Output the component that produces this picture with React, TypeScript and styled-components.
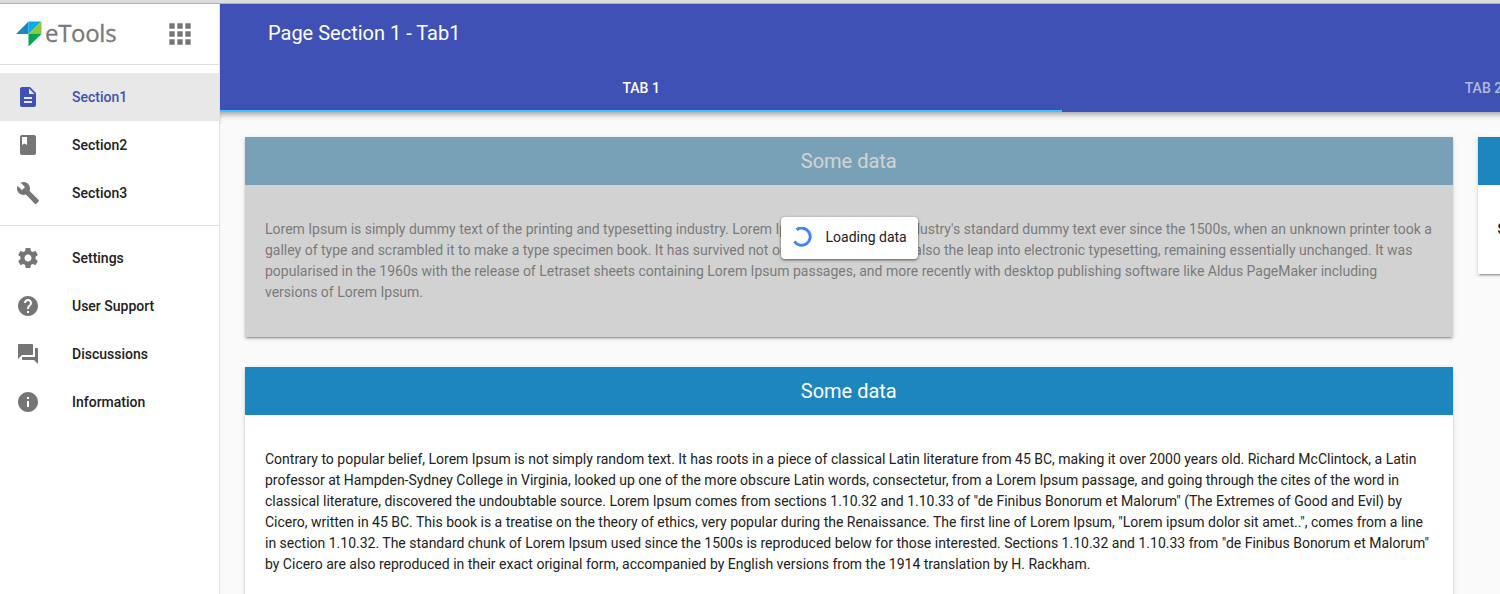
import React from "react";
import styled, { createGlobalStyle } from "styled-components";

const GlobalStyle = createGlobalStyle`
  * { box-sizing: border-box; }
  html, body { margin: 0; padding: 0; height: 594px; overflow: hidden; }
  body {
    font-family: Roboto, "Noto Sans", sans-serif;
    font-size: 14px;
    color: #212121;
    background: #fafafa;
  }
`;

const Page = styled.div`
  display: flex;
  flex-direction: column;
  height: 594px;
  overflow: hidden;
`;

const WindowEdge = styled.div`
  flex: none;
  height: 4px;
  background: #dcdcdc;
  border-bottom: 1px solid #b0b0b0;
`;

const Layout = styled.div`
  flex: 1;
  display: flex;
  min-height: 0;
`;

const Drawer = styled.nav`
  flex: none;
  width: 220px;
  background: #fff;
  border-right: 1px solid #e0e0e0;
`;

const Brand = styled.div`
  display: flex;
  align-items: center;
  justify-content: space-between;
  height: 61px;
  padding: 1px 23.5px 0 16px;
  border-bottom: 1px solid #e0e0e0;
`;

const Logo = styled.div`
  display: flex;
  align-items: center;
  padding-bottom: 1px;
`;

const LogoMark = styled.svg`
  width: 27px;
  height: 26px;
`;

const LogoText = styled.span`
  margin: -2px 0 0 2px;
  font: 400 24px/30px "Open Sans", sans-serif;
  letter-spacing: -0.3px;
  color: #77787b;
  -webkit-text-stroke: 0.3px #77787b;
`;

const Icon = styled.svg<{ $size?: number }>`
  flex: none;
  width: ${(p) => p.$size ?? 24}px;
  height: ${(p) => p.$size ?? 24}px;
  fill: currentColor;
`;

const AppsButton = styled.span`
  display: flex;
  padding-bottom: 1px;
  color: #757575;
`;

const Menu = styled.div`
  padding: 8px 0;
  & + & { border-top: 1px solid #e0e0e0; }
`;

const MenuItem = styled.div<{ $active?: boolean }>`
  display: flex;
  align-items: center;
  gap: 32px;
  height: 48px;
  padding-left: 16px;
  font-weight: 500;
  color: ${(p) => (p.$active ? "#3f51b5" : "#212121")};
  background: ${(p) => (p.$active ? "#e8e8e8" : "transparent")};
  ${Icon} { color: ${(p) => (p.$active ? "#3f51b5" : "#757575")}; }
`;

const Main = styled.main`
  flex: 1;
  min-width: 0;
  overflow: hidden;
`;

const Wide = styled.div`
  width: 1684.6px;
`;

const Header = styled.header`
  position: relative;
  height: 108px;
  color: #fff;
  background: #3f51b5;

  &::after {
    content: "";
    position: absolute;
    top: 100%;
    left: 0;
    right: 0;
    height: 12px;
    box-shadow: inset 0 5px 6px -3px rgba(0, 0, 0, 0.4);
  }
`;

const Title = styled.h1`
  margin: 0;
  height: 60px;
  padding-left: 48px;
  font-size: 20px;
  font-weight: 400;
  line-height: 58px;
`;

const Tabs = styled.div`
  display: flex;
  height: 48px;
`;

const Tab = styled.div<{ $active?: boolean }>`
  flex: 1;
  display: flex;
  align-items: center;
  justify-content: center;
  font-weight: 500;
  color: ${(p) => (p.$active ? "#fff" : "rgba(255, 255, 255, 0.6)")};
  box-shadow: ${(p) => (p.$active ? "inset 0 -2px #40c4ff" : "none")};
`;

const Content = styled.div`
  display: flex;
  align-items: flex-start;
  gap: 25px;
  padding: 25px;
`;

const Column = styled.div<{ $width: number }>`
  flex: none;
  display: flex;
  flex-direction: column;
  gap: 30px;
  width: ${(p) => p.$width}px;
`;

const Card = styled.section`
  position: relative;
  background: #fff;
  box-shadow: 0 2px 2px rgba(0, 0, 0, 0.14), 0 1px 5px rgba(0, 0, 0, 0.12),
    0 3px 1px -2px rgba(0, 0, 0, 0.2);
`;

const CardTitle = styled.h2`
  margin: 0;
  height: 48px;
  padding-right: 0.5px;
  font-size: 20px;
  font-weight: 400;
  line-height: 48px;
  text-align: center;
  color: #fff;
  background: #1e86bf;
`;

const CardBody = styled.div<{ $strong?: boolean }>`
  padding: 34px 21px 34px ${(p) => (p.$strong ? "19.5px" : "20px")};
  font-weight: ${(p) => (p.$strong ? 700 : 400)};
  line-height: 21px;
  letter-spacing: -0.004px;
`;

const Veil = styled.div`
  position: absolute;
  inset: 0;
  display: flex;
  align-items: center;
  justify-content: center;
  padding-top: 1px;
  background: rgba(180, 180, 180, 0.6);
`;

const Loading = styled.div`
  display: flex;
  align-items: center;
  gap: 14px;
  width: 137px;
  height: 42px;
  padding: 0 0 1px 11px;
  border-radius: 4px;
  background: #fff;
  box-shadow: 0 1px 3px rgba(0, 0, 0, 0.6);
  white-space: nowrap;
`;

const Spinner = styled.svg`
  flex: none;
  width: 20px;
  height: 20px;
  fill: none;
  stroke: #4285f4;
  stroke-width: 3;
`;

const paths = {
  apps: "M4 8h4V4H4v4zm6 12h4v-4h-4v4zm-6 0h4v-4H4v4zm0-6h4v-4H4v4zm6 0h4v-4h-4v4zm6-10v4h4V4h-4zm-6 4h4V4h-4v4zm6 6h4v-4h-4v4zm0 6h4v-4h-4v4z",
  description: "M14 2H6c-1.1 0-1.99.9-1.99 2L4 20c0 1.1.89 2 1.99 2H18c1.1 0 2-.9 2-2V8l-6-6zm2 16H8v-2h8v2zm0-4H8v-2h8v2zm-3-5V3.5L18.5 9H13z",
  book: "M18 2H6c-1.1 0-2 .9-2 2v16c0 1.1.9 2 2 2h12c1.1 0 2-.9 2-2V4c0-1.1-.9-2-2-2zM6 4h5v8l-2.5-1.5L6 12V4z",
  build: "M22.7 19l-9.1-9.1c.9-2.3.4-5-1.5-6.9-2-2-5-2.4-7.4-1.3L9 6 6 9 1.6 4.7C.4 7.1.9 10.1 2.9 12.1c1.9 1.9 4.6 2.4 6.9 1.5l9.1 9.1c.4.4 1 .4 1.4 0l2.3-2.3c.5-.4.5-1.1.1-1.4z",
  settings: "M19.43 12.98c.04-.32.07-.64.07-.98s-.03-.66-.07-.98l2.11-1.65c.19-.15.24-.42.12-.64l-2-3.46c-.12-.22-.39-.3-.61-.22l-2.49 1c-.52-.4-1.08-.73-1.69-.98l-.38-2.65C14.46 2.18 14.25 2 14 2h-4c-.25 0-.46.18-.49.42l-.38 2.65c-.61.25-1.17.59-1.69.98l-2.49-1c-.23-.09-.49 0-.61.22l-2 3.46c-.13.22-.07.49.12.64l2.11 1.65c-.04.32-.07.65-.07.98s.03.66.07.98l-2.11 1.65c-.19.15-.24.42-.12.64l2 3.46c.12.22.39.3.61.22l2.49-1c.52.4 1.08.73 1.69.98l.38 2.65c.03.24.24.42.49.42h4c.25 0 .46-.18.49-.42l.38-2.65c.61-.25 1.17-.59 1.69-.98l2.49 1c.23.09.49 0 .61-.22l2-3.46c.12-.22.07-.49-.12-.64l-2.11-1.65zM12 15.5c-1.93 0-3.5-1.57-3.5-3.5s1.57-3.5 3.5-3.5 3.5 1.57 3.5 3.5-1.57 3.5-3.5 3.5z",
  help: "M12 2C6.48 2 2 6.48 2 12s4.48 10 10 10 10-4.48 10-10S17.52 2 12 2zm1 17h-2v-2h2v2zm2.07-7.75l-.9.92C13.45 12.9 13 13.5 13 15h-2v-.5c0-1.1.45-2.1 1.17-2.83l1.24-1.26c.37-.36.59-.86.59-1.41 0-1.1-.9-2-2-2s-2 .9-2 2H8c0-2.21 1.79-4 4-4s4 1.79 4 4c0 .88-.36 1.68-.93 2.25z",
  answer: "M21 6h-2v9H6v2c0 .55.45 1 1 1h11l4 4V7c0-.55-.45-1-1-1zm-4 6V3c0-.55-.45-1-1-1H3c-.55 0-1 .45-1 1v14l4-4h10c.55 0 1-.45 1-1z",
  info: "M12 2C6.48 2 2 6.48 2 12s4.48 10 10 10 10-4.48 10-10S17.52 2 12 2zm1 15h-2v-6h2v6zm0-8h-2V7h2v2z",
};

type IconName = keyof typeof paths;

const Glyph = ({ name, size }: { name: IconName; size?: number }) => (
  <Icon viewBox="0 0 24 24" $size={size}>
    <path d={paths[name]} />
  </Icon>
);

const sections: { icon: IconName; label: string }[] = [
  { icon: "description", label: "Section1" },
  { icon: "book", label: "Section2" },
  { icon: "build", label: "Section3" },
];

const links: { icon: IconName; label: string }[] = [
  { icon: "settings", label: "Settings" },
  { icon: "help", label: "User Support" },
  { icon: "answer", label: "Discussions" },
  { icon: "info", label: "Information" },
];

export default function App() {
  return (
    <Page>
      <GlobalStyle />
      <WindowEdge />
      <Layout>
        <Drawer>
          <Brand>
            <Logo>
              <LogoMark viewBox="0 0 27 26">
                <path d="M0 13 12.5 0.5V13z" fill="#1c86c7" />
                <path d="M12.5 0.5H25.5L12.5 13z" fill="#00aeef" />
                <path d="M25.5 0.5V13h-13z" fill="#8dc63f" />
                <path d="M12.5 13h13L12.5 25.5z" fill="#00a651" />
              </LogoMark>
              <LogoText>eTools</LogoText>
            </Logo>
            <AppsButton>
              <Glyph name="apps" size={32} />
            </AppsButton>
          </Brand>
          <Menu>
            {sections.map((s, i) => (
              <MenuItem key={s.label} $active={i === 0}>
                <Glyph name={s.icon} />
                {s.label}
              </MenuItem>
            ))}
          </Menu>
          <Menu>
            {links.map((l) => (
              <MenuItem key={l.label}>
                <Glyph name={l.icon} />
                {l.label}
              </MenuItem>
            ))}
          </Menu>
        </Drawer>
        <Main>
          <Wide>
            <Header>
              <Title>Page Section 1 - Tab1</Title>
              <Tabs>
                <Tab $active>TAB 1</Tab>
                <Tab>TAB 2</Tab>
              </Tabs>
            </Header>
            <Content>
              <Column $width={1208}>
                <Card>
                  <CardTitle>Some data</CardTitle>
                  <CardBody>
                    Lorem Ipsum is simply dummy text of the printing and typesetting industry. Lorem Ipsum has been the industry's standard dummy text ever since the 1500s, when an unknown printer took a galley of type and scrambled it to make a type specimen book. It has survived not only five centuries, but also the leap into electronic typesetting, remaining essentially unchanged. It was popularised in the 1960s with the release of Letraset sheets containing Lorem Ipsum passages, and more recently with desktop publishing software like Aldus PageMaker including versions of Lorem Ipsum.
                  </CardBody>
                  <Veil>
                    <Loading>
                      <Spinner viewBox="0 0 20 20">
                        <path d="M4.6 2.7A8.6 8.6 0 1 1 2.4 14.4" />
                      </Spinner>
                      Loading data
                    </Loading>
                  </Veil>
                </Card>
                <Card>
                  <CardTitle>Some data</CardTitle>
                  <CardBody>
                    Contrary to popular belief, Lorem Ipsum is not simply random text. It has roots in a piece of classical Latin literature from 45 BC, making it over 2000 years old. Richard McClintock, a Latin professor at Hampden-Sydney College in Virginia, looked up one of the more obscure Latin words, consectetur, from a Lorem Ipsum passage, and going through the cites of the word in classical literature, discovered the undoubtable source. Lorem Ipsum comes from sections 1.10.32 and 1.10.33 of "de Finibus Bonorum et Malorum" (The Extremes of Good and Evil) by Cicero, written in 45 BC. This book is a treatise on the theory of ethics, very popular during the Renaissance. The first line of Lorem Ipsum, "Lorem ipsum dolor sit amet..", comes from a line in section 1.10.32. The standard chunk of Lorem Ipsum used since the 1500s is reproduced below for those interested. Sections 1.10.32 and 1.10.33 from "de Finibus Bonorum et Malorum" by Cicero are also reproduced in their exact original form, accompanied by English versions from the 1914 translation by H. Rackham.
                  </CardBody>
                </Card>
              </Column>
              <Column $width={402}>
                <Card>
                  <CardTitle />
                  <CardBody $strong>S</CardBody>
                </Card>
              </Column>
            </Content>
          </Wide>
        </Main>
      </Layout>
    </Page>
  );
}
